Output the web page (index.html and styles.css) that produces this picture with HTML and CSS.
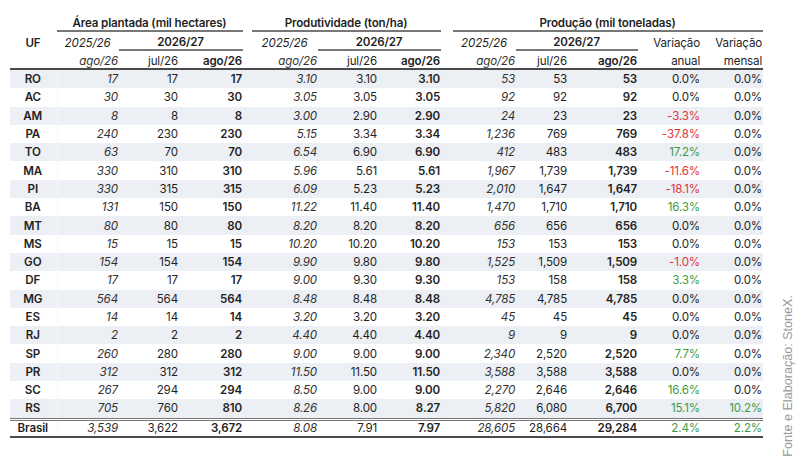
FILE: index.html
```html
<!doctype html>
<html lang="pt-BR">
  <head>
    <meta charset="UTF-8" />
    <title>Milho - estimativas por UF</title>
    <link rel="stylesheet" href="styles.css">
  </head>
  <body>
    <div class="page">
      <table class="crop-table">
        <colgroup>
          <col class="c-uf" />
          <col class="c-a1" /><col class="c-a2" /><col class="c-a3" />
          <col class="c-sp1" />
          <col class="c-p1" /><col class="c-p2" /><col class="c-p3" />
          <col class="c-sp2" />
          <col class="c-d1" /><col class="c-d2" /><col class="c-d3" />
          <col class="c-var1" /><col class="c-var2" />
        </colgroup>
        <thead>
          <tr class="head-groups">
            <th></th>
            <th colspan="3" class="group">Área plantada (mil hectares)</th>
            <th></th>
            <th colspan="3" class="group">Produtividade (ton/ha)</th>
            <th></th>
            <th colspan="5" class="group">Produção (mil toneladas)</th>
          </tr>
          <tr class="head-years">
            <th class="uf">UF</th>
            <th class="prev">2025/26</th>
            <th colspan="2" class="year">2026/27</th>
            <th></th>
            <th class="prev">2025/26</th>
            <th colspan="2" class="year">2026/27</th>
            <th></th>
            <th class="prev">2025/26</th>
            <th colspan="2" class="year">2026/27</th>
            <th class="var">Variação</th>
            <th class="var">Variação</th>
          </tr>
          <tr class="head-months">
            <th></th>
            <th class="i">ago/26</th><th>jul/26</th><th class="b">ago/26</th>
            <th></th>
            <th class="i">ago/26</th><th>jul/26</th><th class="b">ago/26</th>
            <th></th>
            <th class="i">ago/26</th><th>jul/26</th><th class="b">ago/26</th>
            <th>anual</th><th>mensal</th>
          </tr>
        </thead>
        <tbody>
          <tr><td class="uf">RO</td><td class="i">17</td><td>17</td><td class="b">17</td><td></td><td class="i">3.10</td><td>3.10</td><td class="b">3.10</td><td></td><td class="i">53</td><td>53</td><td class="b">53</td><td>0.0%</td><td>0.0%</td></tr>
          <tr><td class="uf">AC</td><td class="i">30</td><td>30</td><td class="b">30</td><td></td><td class="i">3.05</td><td>3.05</td><td class="b">3.05</td><td></td><td class="i">92</td><td>92</td><td class="b">92</td><td>0.0%</td><td>0.0%</td></tr>
          <tr><td class="uf">AM</td><td class="i">8</td><td>8</td><td class="b">8</td><td></td><td class="i">3.00</td><td>2.90</td><td class="b">2.90</td><td></td><td class="i">24</td><td>23</td><td class="b">23</td><td class="neg">-3.3%</td><td>0.0%</td></tr>
          <tr><td class="uf">PA</td><td class="i">240</td><td>230</td><td class="b">230</td><td></td><td class="i">5.15</td><td>3.34</td><td class="b">3.34</td><td></td><td class="i">1,236</td><td>769</td><td class="b">769</td><td class="neg">-37.8%</td><td>0.0%</td></tr>
          <tr><td class="uf">TO</td><td class="i">63</td><td>70</td><td class="b">70</td><td></td><td class="i">6.54</td><td>6.90</td><td class="b">6.90</td><td></td><td class="i">412</td><td>483</td><td class="b">483</td><td class="pos">17.2%</td><td>0.0%</td></tr>
          <tr><td class="uf">MA</td><td class="i">330</td><td>310</td><td class="b">310</td><td></td><td class="i">5.96</td><td>5.61</td><td class="b">5.61</td><td></td><td class="i">1,967</td><td>1,739</td><td class="b">1,739</td><td class="neg">-11.6%</td><td>0.0%</td></tr>
          <tr><td class="uf">PI</td><td class="i">330</td><td>315</td><td class="b">315</td><td></td><td class="i">6.09</td><td>5.23</td><td class="b">5.23</td><td></td><td class="i">2,010</td><td>1,647</td><td class="b">1,647</td><td class="neg">-18.1%</td><td>0.0%</td></tr>
          <tr><td class="uf">BA</td><td class="i">131</td><td>150</td><td class="b">150</td><td></td><td class="i">11.22</td><td>11.40</td><td class="b">11.40</td><td></td><td class="i">1,470</td><td>1,710</td><td class="b">1,710</td><td class="pos">16.3%</td><td>0.0%</td></tr>
          <tr><td class="uf">MT</td><td class="i">80</td><td>80</td><td class="b">80</td><td></td><td class="i">8.20</td><td>8.20</td><td class="b">8.20</td><td></td><td class="i">656</td><td>656</td><td class="b">656</td><td>0.0%</td><td>0.0%</td></tr>
          <tr><td class="uf">MS</td><td class="i">15</td><td>15</td><td class="b">15</td><td></td><td class="i">10.20</td><td>10.20</td><td class="b">10.20</td><td></td><td class="i">153</td><td>153</td><td class="b">153</td><td>0.0%</td><td>0.0%</td></tr>
          <tr><td class="uf">GO</td><td class="i">154</td><td>154</td><td class="b">154</td><td></td><td class="i">9.90</td><td>9.80</td><td class="b">9.80</td><td></td><td class="i">1,525</td><td>1,509</td><td class="b">1,509</td><td class="neg">-1.0%</td><td>0.0%</td></tr>
          <tr><td class="uf">DF</td><td class="i">17</td><td>17</td><td class="b">17</td><td></td><td class="i">9.00</td><td>9.30</td><td class="b">9.30</td><td></td><td class="i">153</td><td>158</td><td class="b">158</td><td class="pos">3.3%</td><td>0.0%</td></tr>
          <tr><td class="uf">MG</td><td class="i">564</td><td>564</td><td class="b">564</td><td></td><td class="i">8.48</td><td>8.48</td><td class="b">8.48</td><td></td><td class="i">4,785</td><td>4,785</td><td class="b">4,785</td><td>0.0%</td><td>0.0%</td></tr>
          <tr><td class="uf">ES</td><td class="i">14</td><td>14</td><td class="b">14</td><td></td><td class="i">3.20</td><td>3.20</td><td class="b">3.20</td><td></td><td class="i">45</td><td>45</td><td class="b">45</td><td>0.0%</td><td>0.0%</td></tr>
          <tr><td class="uf">RJ</td><td class="i">2</td><td>2</td><td class="b">2</td><td></td><td class="i">4.40</td><td>4.40</td><td class="b">4.40</td><td></td><td class="i">9</td><td>9</td><td class="b">9</td><td>0.0%</td><td>0.0%</td></tr>
          <tr><td class="uf">SP</td><td class="i">260</td><td>280</td><td class="b">280</td><td></td><td class="i">9.00</td><td>9.00</td><td class="b">9.00</td><td></td><td class="i">2,340</td><td>2,520</td><td class="b">2,520</td><td class="pos">7.7%</td><td>0.0%</td></tr>
          <tr><td class="uf">PR</td><td class="i">312</td><td>312</td><td class="b">312</td><td></td><td class="i">11.50</td><td>11.50</td><td class="b">11.50</td><td></td><td class="i">3,588</td><td>3,588</td><td class="b">3,588</td><td>0.0%</td><td>0.0%</td></tr>
          <tr><td class="uf">SC</td><td class="i">267</td><td>294</td><td class="b">294</td><td></td><td class="i">8.50</td><td>9.00</td><td class="b">9.00</td><td></td><td class="i">2,270</td><td>2,646</td><td class="b">2,646</td><td class="pos">16.6%</td><td>0.0%</td></tr>
          <tr><td class="uf">RS</td><td class="i">705</td><td>760</td><td class="b">810</td><td></td><td class="i">8.26</td><td>8.00</td><td class="b">8.27</td><td></td><td class="i">5,820</td><td>6,080</td><td class="b">6,700</td><td class="pos">15.1%</td><td class="pos">10.2%</td></tr>
        </tbody>
        <tfoot>
          <tr><td class="uf">Brasil</td><td class="i">3,539</td><td>3,622</td><td class="b">3,672</td><td></td><td class="i">8.08</td><td>7.91</td><td class="b">7.97</td><td></td><td class="i">28,605</td><td>28,664</td><td class="b">29,284</td><td class="pos">2.4%</td><td class="pos">2.2%</td></tr>
        </tfoot>
      </table>
      <aside class="source">Fonte e Elaboração: StoneX.</aside>
    </div>
  </body>
</html>
```

FILE: styles.css
```css
:root {
  --text: #1f1f1f;
  --stripe: #eceff4;
  --rule: #777777;
  --rule-dark: #4a4a4a;
  --red: #e2343c;
  --green: #3b9c47;
}
body {
  margin: 0;
  background: #ffffff;
  font-family: Inter, "Liberation Sans", sans-serif;
  color: var(--text);
}

.page {
  display: flex;
  align-items: flex-end;
  height: 466px;
  box-sizing: border-box;
  padding: 10px 0 6px 10px;
}

.crop-table {
  align-self: flex-start;
  table-layout: fixed;
  width: 753px;
  border-collapse: collapse;
  font-size: 11.6px;
  letter-spacing: -0.15px;
}

.c-uf { width: 47px; }
.c-a1 { width: 62px; }
.c-a2 { width: 60px; }
.c-a3 { width: 64px; }
.c-sp1 { width: 9px; }
.c-p1 { width: 66px; }
.c-p2 { width: 60px; }
.c-p3 { width: 63px; }
.c-sp2 { width: 12px; }
.c-d1 { width: 63px; }
.c-d2 { width: 52px; }
.c-d3 { width: 70px; }
.c-var1 { width: 63px; }
.c-var2 { width: 62px; }

th, td {
  padding: 0 1px 0 0;
  text-align: right;
  white-space: nowrap;
}
th {
  font-weight: 400;
  line-height: 14px;
  vertical-align: bottom;
}

.head-groups th {
  height: 20px;
}
.head-groups .group {
  text-align: center;
  font-weight: 600;
  border-bottom: 2px solid var(--rule);
}
.head-years th {
  height: 17px;
}
.head-years .uf {
  text-align: center;
  font-weight: 600;
}
.head-years .prev {
  text-align: center;
  font-style: italic;
}
.head-years .year {
  text-align: center;
  font-weight: 600;
  border-bottom: 2px solid var(--rule);
}
.head-months th {
  height: 17px;
}
.head-months {
  border-bottom: 2px solid var(--rule-dark);
}

tbody td {
  height: 18.3px;
}
tbody tr:nth-child(odd) {
  background: var(--stripe);
}
td.uf {
  text-align: center;
  font-weight: 600;
  border-right: 1px solid #f6f7f9;
}

.i {
  font-style: italic;
  color: #333333;
}
.b {
  font-weight: 600;
}
.neg {
  color: var(--red);
}
.pos {
  color: var(--green);
}

tfoot tr {
  border-top: 3px double var(--rule);
  border-bottom: 2px solid var(--rule-dark);
}
tfoot td {
  height: 15px;
}

.source {
  margin-left: 18px;
  margin-bottom: 3px;
  writing-mode: vertical-rl;
  transform: rotate(180deg);
  font-family: "Liberation Sans", Arial, sans-serif;
  font-size: 12.6px;
  color: #9a9a9a;
  white-space: nowrap;
}
```
